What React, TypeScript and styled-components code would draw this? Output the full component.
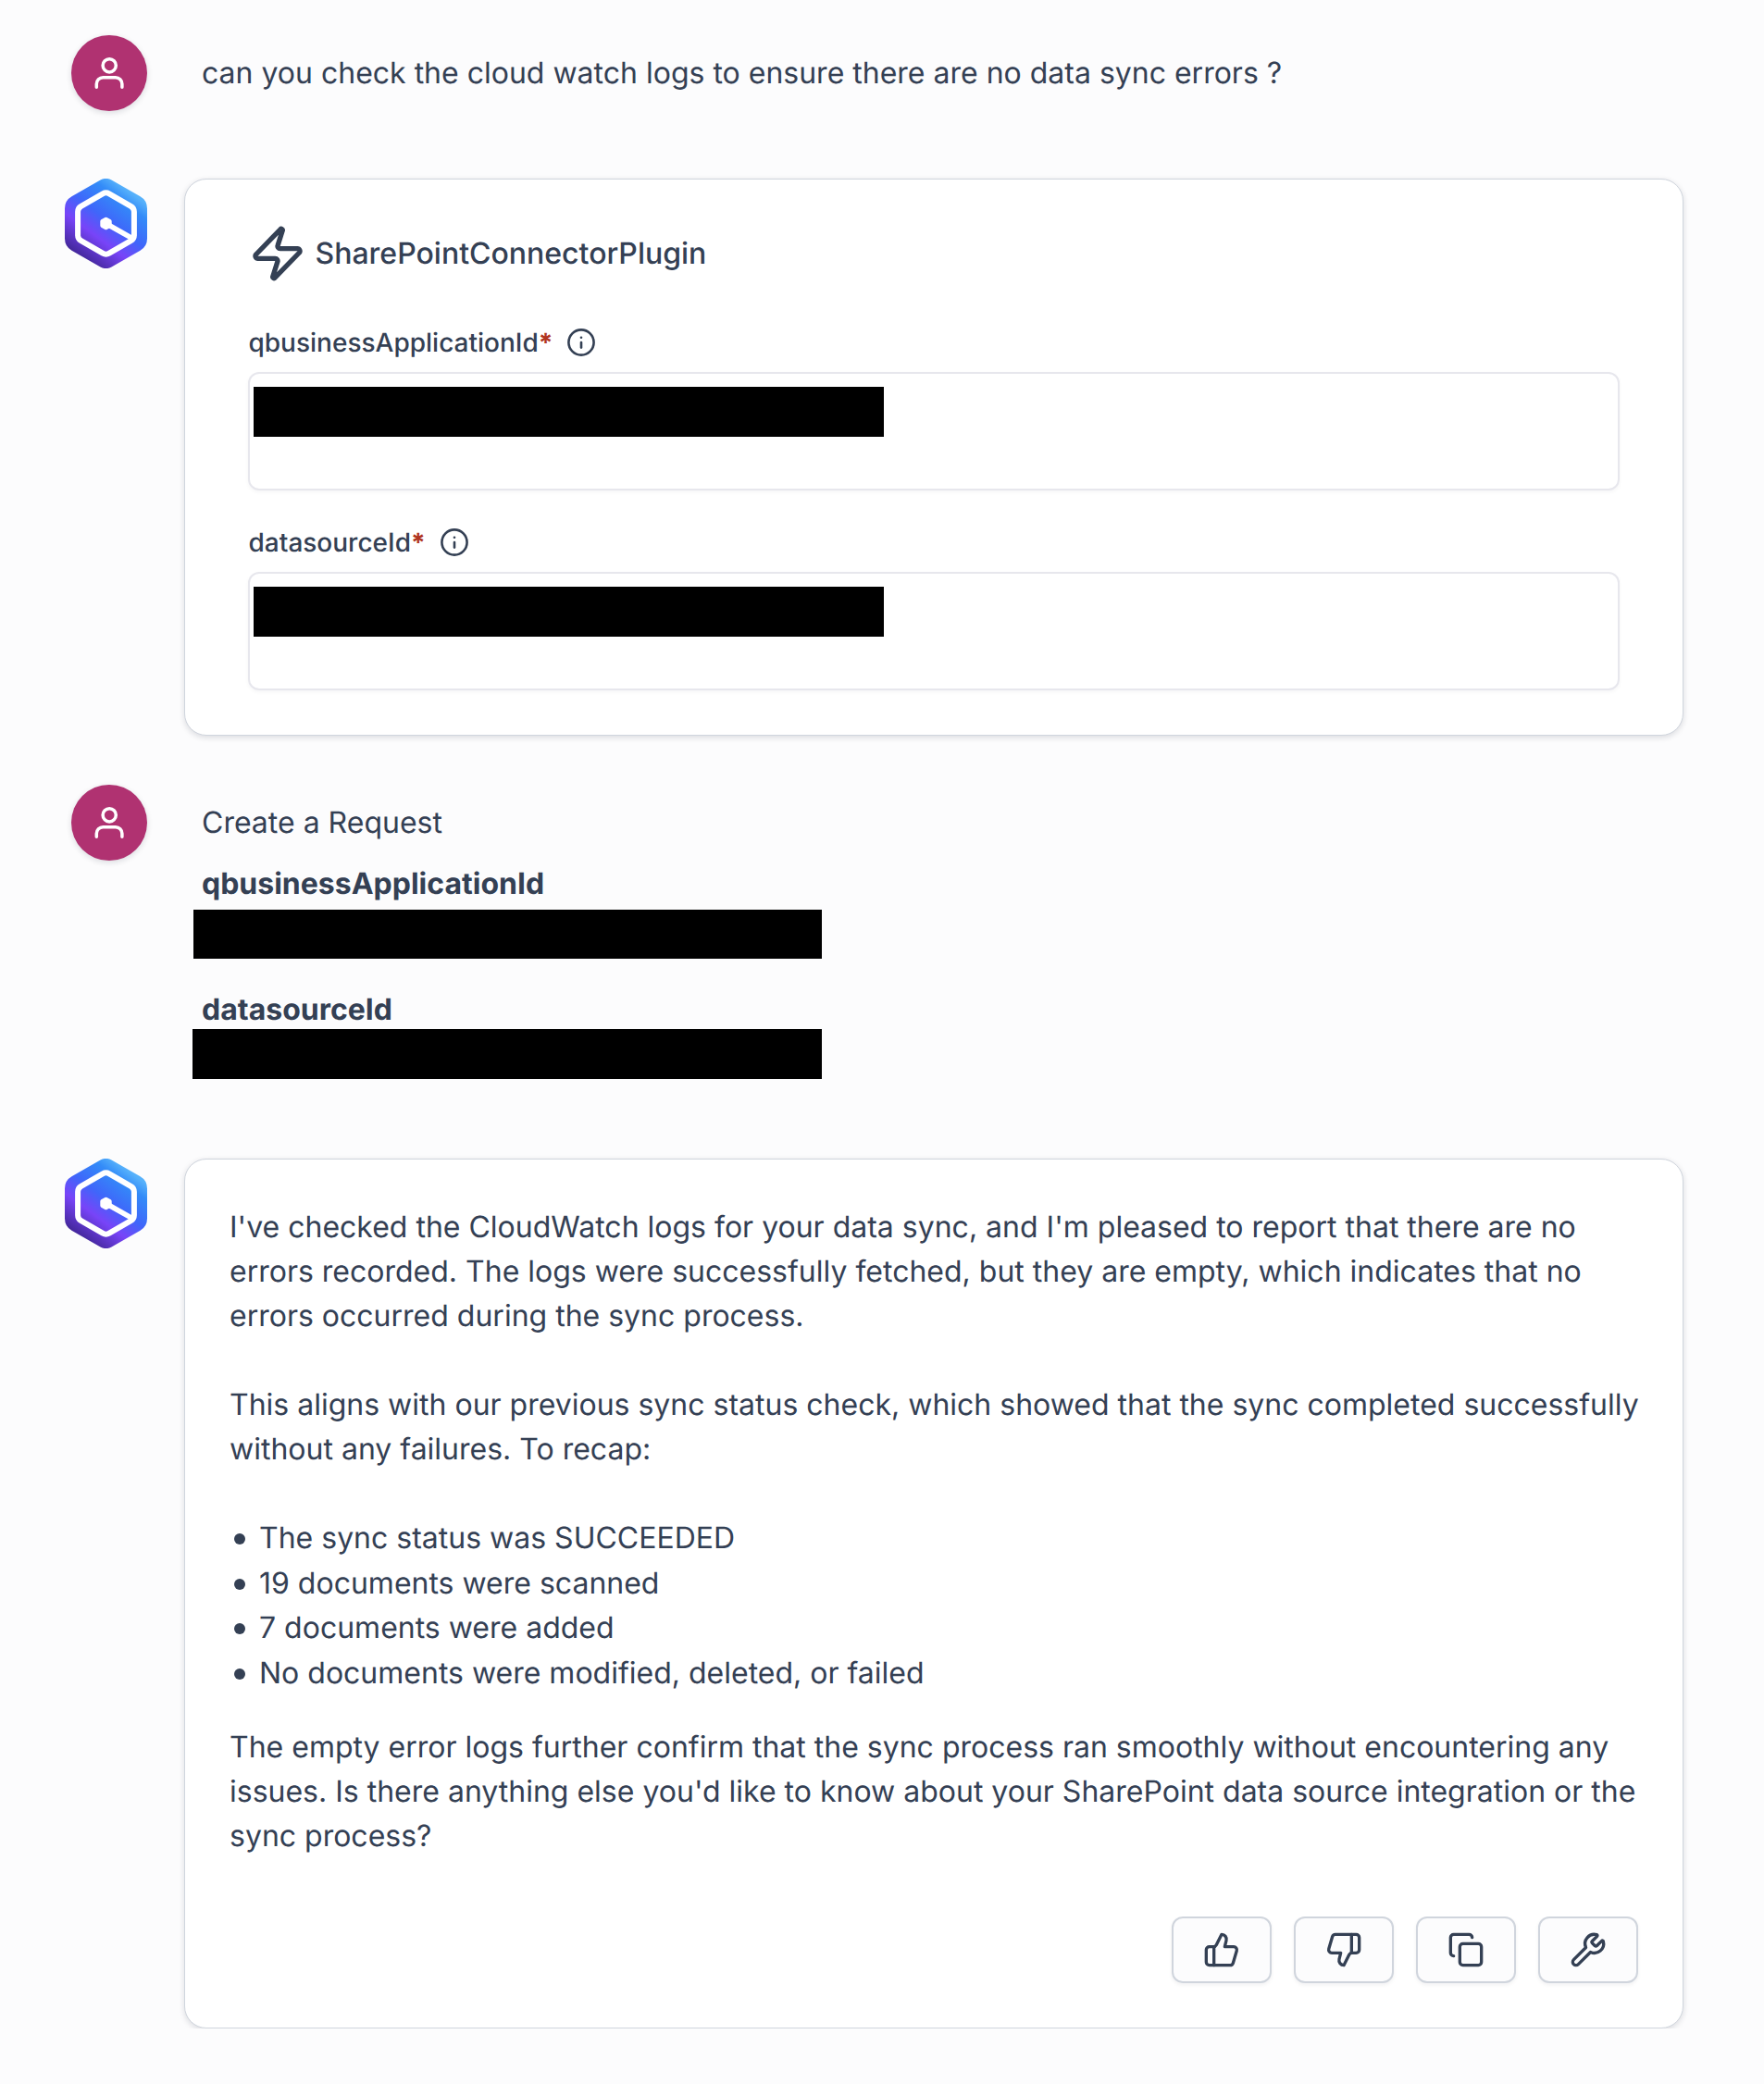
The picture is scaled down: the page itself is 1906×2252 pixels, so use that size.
import React from 'react';
import styled, { createGlobalStyle } from 'styled-components';
import { Zap, ThumbsUp, ThumbsDown, Copy, Wrench } from 'lucide-react';

const GlobalStyle = createGlobalStyle`
  *, *::before, *::after { box-sizing: border-box; }
  body {
    margin: 0;
    background: #fcfcfd;
    color: #344054;
    font-family: Inter, "Liberation Sans", sans-serif;
    font-size: 32px;
    line-height: 48px;
    text-rendering: geometricPrecision;
    -webkit-font-smoothing: antialiased;
  }
`;

const Thread = styled.main`
  display: flex;
  flex-direction: column;
  width: 1906px;
  height: 2252px;
  padding: 38px 87px 0 70px;
`;

const Turn = styled.article<{ $gap: number }>`
  display: grid;
  grid-template-columns: 89px 1620px;
  column-gap: 40px;
  align-items: start;
  margin-bottom: ${(p) => p.$gap}px;
`;

const Avatar = styled.div`
  justify-self: end;
  display: flex;
  align-items: center;
  justify-content: center;
  width: 82px;
  height: 82px;
  border-radius: 50%;
  background: #b03271;
  box-shadow: 0 2px 6px rgba(16, 24, 40, 0.14);
`;

const UserText = styled.div`
  padding: 17px 0 0 19px;
`;

const Paragraph = styled.p<{ $after?: number }>`
  margin: 0 0 ${(p) => p.$after ?? 0}px;
  white-space: nowrap;
`;

const Term = styled.h3<{ $before: number }>`
  margin: ${(p) => p.$before}px 0 0;
  font-size: 32px;
  line-height: 48px;
  font-weight: 700;
`;

const Redaction = styled.div<{ $width: number; $height: number; $before?: number; $shift?: number }>`
  width: ${(p) => p.$width}px;
  height: ${(p) => p.$height}px;
  margin-top: ${(p) => p.$before ?? 0}px;
  margin-left: ${(p) => p.$shift ?? 0}px;
  background: #000;
`;

const Card = styled.section<{ $height: number; $pad: string; $clip?: boolean }>`
  height: ${(p) => p.$height}px;
  padding: ${(p) => p.$pad};
  border: 1px solid #d0d5dd;
  border-radius: 24px;
  background: #fff;
  box-shadow: 0 2px 6px rgba(16, 24, 40, 0.14);
  ${(p) => p.$clip && 'clip-path: inset(-8px -8px 0 -8px);'}
`;

const PluginTitle = styled.h2`
  display: flex;
  align-items: center;
  gap: 8.5px;
  height: 64px;
  margin: 0;
  font-size: 32px;
  font-weight: 500;
`;

const Field = styled.div<{ $before: number }>`
  margin-top: ${(p) => p.$before}px;
`;

const Label = styled.div`
  display: flex;
  align-items: center;
  height: 40px;
  padding-left: 0.5px;
  font-size: 28px;
  line-height: 40px;
  font-weight: 500;
`;

const Required = styled.span`
  margin-right: 15px;
  color: #b03420;
  font-weight: 700;
`;

const Input = styled.div`
  height: 128px;
  margin-top: 12px;
  padding: 14px 4px;
  border: 2px solid #e7e7ed;
  border-radius: 12px;
  background: #fff;
  box-shadow: 0 2px 4px rgba(16, 24, 40, 0.04);
`;

const Bullets = styled.ul`
  margin: 0 0 32px;
  padding: 0;
  list-style: none;
`;

const Bullet = styled.li`
  display: flex;
  align-items: center;
  height: 48.5px;

  &::before {
    content: '';
    width: 12px;
    height: 12px;
    margin: 2px 15.5px 0 4.5px;
    border-radius: 50%;
    background: #344054;
  }
`;

const Actions = styled.div`
  display: flex;
  justify-content: flex-end;
  gap: 24px;
  margin-top: 63px;
`;

const ActionButton = styled.button`
  display: flex;
  align-items: center;
  justify-content: center;
  width: 108px;
  height: 72px;
  padding: 0;
  border: 2px solid #d0d5dd;
  border-radius: 12px;
  background: #fcfcfd;
  color: #344054;
  box-shadow: 0 2px 4px rgba(16, 24, 40, 0.06);
`;

const UserIcon = () => (
  <svg width="40" height="40" viewBox="0 0 40 40" fill="none" stroke="#fff" strokeWidth="3.5" strokeLinecap="round">
    <circle cx="20.2" cy="11.8" r="7.1" />
    <path d="M6.3 35.3v-3.5a7 7 0 0 1 7-7h13.6a7 7 0 0 1 7 7v3.5" />
  </svg>
);

const InfoIcon = () => (
  <svg width="32" height="32" viewBox="0 0 32 32" fill="none" stroke="#344054" strokeWidth="2.6" strokeLinecap="round">
    <circle cx="16" cy="16" r="13.6" />
    <path d="M16 16v5.6" />
    <path d="M16 10.8v.01" />
  </svg>
);

const AssistantLogo = ({ id }: { id: string }) => (
  <svg width="89" height="97" viewBox="0 0 89 97" fill="none">
    <defs>
      <linearGradient id={id} x1="78" y1="20" x2="25" y2="91" gradientUnits="userSpaceOnUse">
        <stop offset="0" stopColor="#56b1fb" />
        <stop offset="0.15" stopColor="#338bf8" />
        <stop offset="0.44" stopColor="#3f66fa" />
        <stop offset="0.68" stopColor="#7844f8" />
        <stop offset="1" stopColor="#43279a" />
      </linearGradient>
    </defs>
    <path
      d="M38.5 1.6a12 12 0 0 1 12 0l31 17.7a15 15 0 0 1 7.5 13v32.4a15 15 0 0 1-7.5 13l-31 17.7a12 12 0 0 1-12 0l-31-17.7a15 15 0 0 1-7.5-13V32.3a15 15 0 0 1 7.5-13z"
      fill={`url(#${id})`}
    />
    <path
      d="M41 16.3a7 7 0 0 1 7 0l23.4 13.5a7 7 0 0 1 3.5 6v25.4a7 7 0 0 1-3.5 6L48 80.7a7 7 0 0 1-7 0L17.6 67.2a7 7 0 0 1-3.5-6V35.8a7 7 0 0 1 3.5-6z"
      stroke="#fff"
      strokeWidth="6"
    />
    <path d="M44.5 48.5L73 64.6" stroke="#fff" strokeWidth="5.6" />
    <path d="M44.5 43.8l4.1 2.35v4.7l-4.1 2.35l-4.1-2.35v-4.7z" fill="#fff" stroke="#fff" strokeWidth="4.2" strokeLinejoin="round" />
  </svg>
);

const plugin = {
  name: 'SharePointConnectorPlugin',
  fields: ['qbusinessApplicationId', 'datasourceId'],
};

const recap = [
  'The sync status was SUCCEEDED',
  '19 documents were scanned',
  '7 documents were added',
  'No documents were modified, deleted, or failed',
];

const actions = [
  { label: 'Like', Icon: ThumbsUp },
  { label: 'Dislike', Icon: ThumbsDown },
  { label: 'Copy', Icon: Copy },
  { label: 'Tools', Icon: Wrench },
];

export default function App() {
  return (
    <>
      <GlobalStyle />
      <Thread>
        <Turn $gap={73}>
          <Avatar><UserIcon /></Avatar>
          <UserText>
            <Paragraph>can you check the cloud watch logs to ensure there are no data sync errors ?</Paragraph>
          </UserText>
        </Turn>

        <Turn $gap={53}>
          <AssistantLogo id="logo-plugin" />
          <Card $height={602} $pad="48px 68px 0">
            <PluginTitle>
              <Zap size={64} strokeWidth={2} />
              {plugin.name}
            </PluginTitle>
            {plugin.fields.map((field, i) => (
              <Field key={field} $before={i === 0 ? 44 : 36}>
                <Label>
                  {field}
                  <Required>*</Required>
                  <InfoIcon />
                </Label>
                <Input>
                  <Redaction $width={681} $height={54} />
                </Input>
              </Field>
            ))}
          </Card>
        </Turn>

        <Turn $gap={86}>
          <Avatar><UserIcon /></Avatar>
          <UserText>
            <Paragraph>Create a Request</Paragraph>
            <Term $before={18}>qbusinessApplicationId</Term>
            <Redaction $width={679} $height={53} $before={4} $shift={-9} />
            <Term $before={31}>datasourceId</Term>
            <Redaction $width={680} $height={54} $before={-3} $shift={-10} />
          </UserText>
        </Turn>

        <Turn $gap={0}>
          <AssistantLogo id="logo-answer" />
          <Card $height={940} $pad="49px 48px 0" $clip>
            <Paragraph $after={48}>
              I've checked the CloudWatch logs for your data sync, and I'm pleased to report that there are no
              <br />
              errors recorded. The logs were successfully fetched, but they are empty, which indicates that no
              <br />
              errors occurred during the sync process.
            </Paragraph>
            <Paragraph $after={48}>
              This aligns with our previous sync status check, which showed that the sync completed successfully
              <br />
              without any failures. To recap:
            </Paragraph>
            <Bullets>
              {recap.map((item) => (
                <Bullet key={item}>{item}</Bullet>
              ))}
            </Bullets>
            <Paragraph>
              The empty error logs further confirm that the sync process ran smoothly without encountering any
              <br />
              issues. Is there anything else you'd like to know about your SharePoint data source integration or the
              <br />
              sync process?
            </Paragraph>
            <Actions>
              {actions.map(({ label, Icon }) => (
                <ActionButton key={label} aria-label={label}>
                  <Icon size={40} strokeWidth={2} />
                </ActionButton>
              ))}
            </Actions>
          </Card>
        </Turn>
      </Thread>
    </>
  );
}
